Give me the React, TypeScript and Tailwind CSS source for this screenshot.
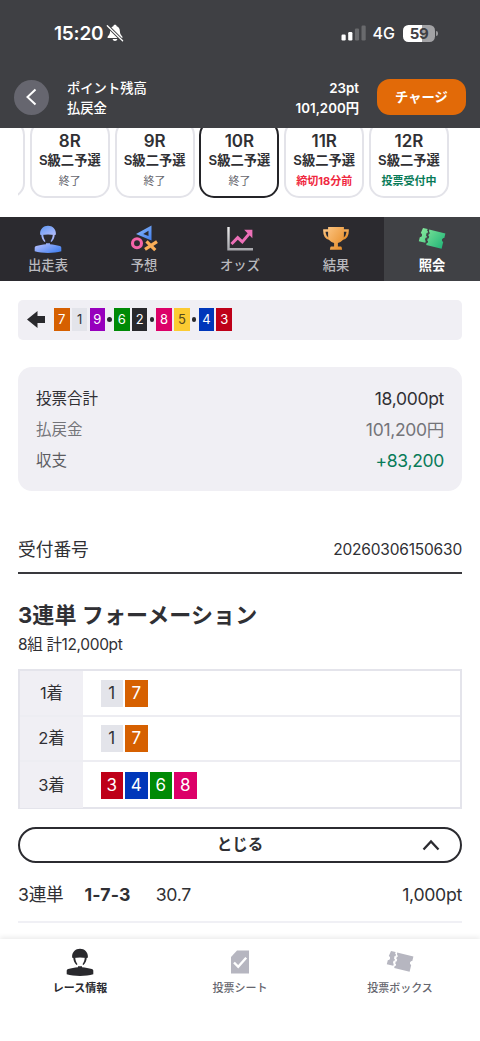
import React from 'react';

type Race = { no: string; name: string; status: string; tone: string; selected?: boolean };

const races: Race[] = [
  { no: '8R', name: 'S級二予選', status: '終了', tone: 'text-[#66666e]' },
  { no: '9R', name: 'S級二予選', status: '終了', tone: 'text-[#66666e]' },
  { no: '10R', name: 'S級二予選', status: '終了', tone: 'text-[#66666e]', selected: true },
  { no: '11R', name: 'S級二予選', status: '締切18分前', tone: 'text-[#f02840] font-bold' },
  { no: '12R', name: 'S級二予選', status: '投票受付中', tone: 'text-[#087b58] font-bold' },
];

const numberColors: Record<number, string> = {
  1: 'bg-[#e3e4ea] text-[#333338]',
  2: 'bg-[#29292d] text-white',
  3: 'bg-[#be0018] text-white',
  4: 'bg-[#0037ba] text-white',
  5: 'bg-[#fccb32] text-[#55481c]',
  6: 'bg-[#008a06] text-white',
  7: 'bg-[#d66000] text-white',
  8: 'bg-[#dc0068] text-white',
  9: 'bg-[#9700bd] text-white',
};

const lineGroups = [[7, 1, 9], [6, 2], [8, 5], [4, 3]];

const formation = [
  { place: '1着', numbers: [1, 7] },
  { place: '2着', numbers: [1, 7] },
  { place: '3着', numbers: [3, 4, 6, 8] },
];

const RiderIcon: React.FC<{ fill: string; className?: string }> = ({ fill, className }) => (
  <svg viewBox="0 0 28 28" className={className} fill={fill}>
    <path d="M6.100 8.800C6 4.200 9.400 .8 14 .8s8 3.400 7.900 8c0 .9-.5 1.400-1.300 1.300-4.400-.9-8.800-.9-13.200 0-.8.1-1.300-.4-1.300-1.300Z" />
    <path d="M7.300 9.500h1.900c.2 2.900 1 4.900 2.300 6.800l-1 .6C8.300 14.900 7.300 12.300 7.300 9.500Zm13.400 0h-1.900c-.2 2.900-1 4.900-2.300 6.800l1 .6c2.200-2 3.200-4.600 3.200-7.400Z" />
    <path d="M12 18.200h4v1.100c3.300.2 7 .9 9.800 1.700 1 .3 1.500.9 1.500 1.700v3.500c-3.800 1.200-8.300 1.700-13.300 1.700S4.500 27.400.7 26.200v-3.500c0-.8.5-1.400 1.500-1.700 2.800-.8 6.500-1.500 9.800-1.700v-1.100Z" />
  </svg>
);

const TicketIcon: React.FC<{ fill: string; className?: string }> = ({ fill, className }) => (
  <svg viewBox="0 0 28 24" className={className} fill={fill}>
    <path d="m5 .9 4.600 1.200-.5 1.900.9.200-.5 2.100-.9-.2-.6 2.600.9.200-.5 2.100-.9-.2-.6 2.600.9.200-.5 2.200-6.500-1.600 1-3.900c1.200-.1 2-.7 2.200-1.700.3-1.100-.2-2-1.200-2.600Z" />
    <path d="m11.100 2.500 16.300 4-1.100 4.500c-1.200 0-2 .6-2.300 1.600-.2 1 .2 1.900 1.200 2.500l-1.600 6.600-15.400-3.800.5-2 .9.200.5-2.100-.9-.2.600-2.600.9.200.5-2.100-.9-.2.600-2.600.9.200.2-1.100-.9-.2Z" />
  </svg>
);

const PredictionIcon = () => (
  <svg viewBox="0 0 28 28" className="h-7 w-7" fill="none">
    <path fillRule="evenodd" d="M21.500.6v14.800L6 9.100Zm-3 5.200-5.300 3.100 5.300 2.200Z" fill="url(#blue)" />
    <circle cx="7" cy="18.300" r="4.500" stroke="#f564a8" strokeWidth="3.100" />
    <path d="m16.500 16.300 8.800 8.800M27 16.600l-12 7.800" stroke="#faae58" strokeWidth="3.200" />
  </svg>
);

const OddsIcon = () => (
  <svg viewBox="0 0 28 28" className="h-7 w-7" fill="none">
    <path d="M2.500 2v22.300H27" stroke="url(#silver)" strokeWidth="2.400" />
    <path d="m5.500 19 6.200-6.300 4.600 4.200 7.600-9" stroke="#ed70b8" strokeWidth="3" />
    <path d="M18.200 4.700h8.200v8.500Z" fill="#ed70b8" />
  </svg>
);

const TrophyIcon = () => (
  <svg viewBox="0 0 28 28" className="h-7 w-7" fill="none">
    <path d="M7 5.500H2.300c-.1 5 2.100 8 6 8.700M21 5.500h4.700c.1 5-2.100 8-6 8.700" stroke="url(#gold)" strokeWidth="2.300" />
    <path d="M6.100 2h15.800v8.500c0 4-2.300 6.700-6 7.500v3.500h2.600c.7 0 1 .3 1.200 1l.4 2.300H7.900l.4-2.300c.2-.7.5-1 1.200-1h2.600V18c-3.700-.8-6-3.500-6-7.500V2Z" fill="url(#gold)" />
  </svg>
);

const tabs = [
  { label: '出走表', icon: <RiderIcon fill="url(#rider)" className="h-7 w-7" /> },
  { label: '予想', icon: <PredictionIcon /> },
  { label: 'オッズ', icon: <OddsIcon /> },
  { label: '結果', icon: <TrophyIcon /> },
  { label: '照会', icon: <TicketIcon fill="url(#green)" className="h-6 w-7" />, active: true },
];

const Gradients = () => (
  <svg className="absolute h-0 w-0">
    <defs>
      <linearGradient id="rider" gradientUnits="userSpaceOnUse" x1="6" y1="0" x2="20" y2="28">
        <stop stopColor="#5b95f2" />
        <stop offset="0.5" stopColor="#b2bcfc" />
        <stop offset="1" stopColor="#4c86f2" />
      </linearGradient>
      <linearGradient id="blue" x1="0" y1="0" x2="1" y2="1">
        <stop stopColor="#8fbcfa" />
        <stop offset="1" stopColor="#417eed" />
      </linearGradient>
      <linearGradient id="gold" x1="0" y1="0" x2="1" y2="1">
        <stop stopColor="#fbc27e" />
        <stop offset="1" stopColor="#e78b24" />
      </linearGradient>
      <linearGradient id="green" gradientUnits="userSpaceOnUse" x1="2" y1="2" x2="25" y2="22">
        <stop stopColor="#88e99d" />
        <stop offset="1" stopColor="#20b477" />
      </linearGradient>
      <linearGradient id="silver" x1="0" y1="0" x2="0" y2="1">
        <stop stopColor="#eeeeef" />
        <stop offset="1" stopColor="#a8a8ad" />
      </linearGradient>
    </defs>
  </svg>
);

const StatusBar = () => (
  <div className="flex h-[66px] items-center pr-[42px] pl-[54px] text-white">
    <span className="pt-px text-[19px] leading-6 font-semibold tracking-[-0.2px]">15:20</span>
    <svg viewBox="0 0 18 18" className="ml-[3px] h-[18px] w-[18px]">
      <path d="M9 .8c-1 0-1.700.6-1.700 1.500C5 3 4.200 5 4.100 7.300 4 10 3.200 11 1.800 12.400c-.6.700-.3 1.600.6 1.600h13.200c.9 0 1.200-.9.600-1.600-1.400-1.400-2.200-2.400-2.300-5.100-.1-2.300-.9-4.300-3.200-5C10.700 1.400 10 .8 9 .8ZM6.600 15h4.800c-.3 1.300-1.200 2-2.400 2s-2.100-.7-2.400-2Z" fill="white" />
      <path d="M1.300 1.700 16.600 16.800" stroke="#3f4044" strokeWidth="3.200" />
      <path d="M1.300 1.700 16.600 16.800" stroke="white" strokeWidth="1.300" strokeLinecap="round" />
    </svg>
    <div className="ml-auto flex items-center">
      <svg viewBox="0 0 25 16" className="h-4 w-[25px]" fill="white">
        <rect x="0.500" y="9.500" width="4.200" height="6" rx="1.200" />
        <rect x="7.200" y="7" width="4.200" height="8.500" rx="1.200" />
        <rect x="13.900" y="3.500" width="4.200" height="12" rx="1.200" opacity=".22" />
        <rect x="20.500" y="0.500" width="4.200" height="15" rx="1.200" opacity=".22" />
      </svg>
      <span className="ml-[7px] text-[16px] leading-5 font-medium">4G</span>
      <div className="ml-2 flex h-[17px] w-[32px] items-center justify-center rounded-[5.500px] bg-linear-to-r from-white from-59% to-[#a2a2a5] to-59% text-[15px] leading-[17px] font-bold tracking-[-0.5px] text-[#3f4044]">
        59
      </div>
      <span className="ml-px h-[5px] w-[2px] rounded-r-full bg-[#98989b]" />
    </div>
  </div>
);

const NumberBox: React.FC<{ value: number; small?: boolean }> = ({ value, small }) => (
  <span
    className={`flex items-center justify-center ${numberColors[value]} ${
      small ? 'h-[22.500px] w-[15.500px] text-[13px]' : 'h-[27px] w-[22.500px] text-[17px]'
    }`}
  >
    {value}
  </span>
);

const RaceCard: React.FC<{ race: Race }> = ({ race }) => (
  <div
    className={`flex h-[78px] w-[80px] shrink-0 flex-col items-center rounded-[15px] border-2 bg-white pt-2 ${
      race.selected ? 'border-[#242428]' : 'border-[#e3e3e9]'
    }`}
  >
    <span className="text-[17px] leading-[22px] font-semibold">{race.no}</span>
    <span className="text-[13.300px] leading-4 font-semibold whitespace-nowrap">{race.name}</span>
    <span className={`mt-[5px] text-[11px] leading-4 whitespace-nowrap ${race.tone}`}>{race.status}</span>
  </div>
);

export default function App() {
  return (
    <div className="flex h-[1041px] w-[480px] flex-col overflow-hidden bg-white font-['Inter','Noto_Sans_CJK_JP',sans-serif] text-[#303034]">
      <Gradients />

      <header className="h-[128px] shrink-0 bg-[#3f4044] text-white">
        <StatusBar />
        <div className="flex h-[62px] items-center pr-[14px] pl-[14px]">
          <button className="flex h-[35px] w-[35px] items-center justify-center rounded-full bg-[#66666f]">
            <svg viewBox="0 0 18 18" className="h-[18px] w-[18px]" fill="none" stroke="white" strokeWidth="2">
              <path d="m12.500 1.500-8 7.500 8 7.500" />
            </svg>
          </button>
          <div className="ml-[18px] pt-px text-[13.300px] leading-5 font-medium">
            <p>ポイント残高</p>
            <p>払戻金</p>
          </div>
          <div className="ml-auto pt-px text-right text-[13.300px] leading-5 font-semibold">
            <p>23pt</p>
            <p>101,200円</p>
          </div>
          <button className="ml-[18px] h-9 w-[89px] rounded-[13px] bg-[#e26a08] pt-0.5 text-[13.300px] font-bold">チャージ</button>
        </div>
      </header>

      <div className="h-[89px] shrink-0 overflow-hidden pl-[18px]">
        <div className="-mt-2 flex justify-end gap-[4.800px] overflow-hidden pr-[31px]">
          <div className="h-[78px] w-[80px] shrink-0 rounded-[15px] border-2 border-[#e3e3e9]" />
          {races.map((race) => (
            <RaceCard key={race.no} race={race} />
          ))}
        </div>
      </div>

      <nav className="grid h-16 shrink-0 grid-cols-5 bg-[#2b2a2f]">
        {tabs.map((tab) => (
          <button
            key={tab.label}
            className={`flex flex-col items-center pt-2 ${
              tab.active ? 'bg-[#404145] font-bold text-white' : 'font-medium text-[#b9b9be]'
            }`}
          >
            <span className="flex h-7 items-center">{tab.icon}</span>
            <span className="mt-1 text-[13.300px] leading-4">{tab.label}</span>
          </button>
        ))}
      </nav>

      <main className="min-h-0 flex-1 overflow-hidden px-[18px] pt-[18.500px]">
        <div className="flex h-10 items-center rounded-[5px] bg-[#f0eff4] pl-[9px]">
          <svg viewBox="0 0 18 18" className="h-[18px] w-[18px]" fill="#29292d">
            <path d="M0 8.500 10.500 0v5H18v7h-7.500v5Z" />
          </svg>
          <div className="ml-[9px] flex gap-[2.300px]">
            {lineGroups.map((group, i) => (
              <React.Fragment key={i}>
                {i > 0 && (
                  <span className="flex w-[4.400px] items-center justify-center">
                    <span className="h-[4.500px] w-[4.500px] shrink-0 rounded-full bg-[#29292d]" />
                  </span>
                )}
                {group.map((n) => (
                  <NumberBox key={n} value={n} small />
                ))}
              </React.Fragment>
            ))}
          </div>
        </div>

        <dl className="mt-[27px] flex h-[124px] flex-col justify-center rounded-[14px] bg-[#f0eff4] px-[18px] pt-[2px] leading-[31.300px]">
          <div className="flex justify-between">
            <dt className="text-[15.500px]">投票合計</dt>
            <dd className="text-[17.500px] tracking-[-0.3px]">18,000pt</dd>
          </div>
          <div className="flex justify-between text-[#747479]">
            <dt className="text-[15.500px]">払戻金</dt>
            <dd className="text-[17.500px] tracking-[-0.3px]">101,200円</dd>
          </div>
          <div className="flex justify-between">
            <dt className="text-[15.500px] text-[#5c5c61]">収支</dt>
            <dd className="text-[17.500px] tracking-[-0.3px] text-[#087b58]">+83,200</dd>
          </div>
        </dl>

        <div className="mt-[35px] flex h-[48px] items-center justify-between border-b-[2.500px] border-[#39393d]">
          <span className="pt-[3px] text-[17.700px]">受付番号</span>
          <span className="pt-[2px] text-[15.500px] tracking-[-0.2px]">20260306150630</span>
        </div>

        <h2 className="mt-[25px] text-[22px] leading-8 font-bold tracking-[0.1px] whitespace-nowrap">3連単 フォーメーション</h2>
        <p className="mt-[4.500px] text-[15.500px] leading-5 tracking-[-0.35px]">8組 計12,000pt</p>

        <div className="mt-[14px] h-[139.500px] divide-y-2 divide-[#ededf2] border-2 border-[#e4e4eb]">
          {formation.map((row) => (
            <div key={row.place} className="flex h-[45.500px]">
              <div className="flex w-[63px] items-center justify-center bg-[#f0eff4] pt-px text-[16.500px]">{row.place}</div>
              <div className="flex items-center gap-[2px] pt-px pl-[17.500px]">
                {row.numbers.map((n) => (
                  <NumberBox key={n} value={n} />
                ))}
              </div>
            </div>
          ))}
        </div>

        <button className="mt-[18.500px] grid h-9 w-full grid-cols-[1fr_auto_1fr] items-center rounded-full border-[2.500px] border-[#2b2b30] px-5 text-[15.500px] font-bold">
          <span />
          <span>とじる</span>
          <svg viewBox="0 0 18 12" className="h-3 w-[18px] justify-self-end" fill="none" stroke="#2b2b30" strokeWidth="2.300">
            <path d="m1.500 10.500 7.500-8 7.500 8" />
          </svg>
        </button>

        <div className="flex h-[59.500px] items-center border-b-2 border-[#f0f0f5] pt-[8px] text-[17.700px] tracking-[-0.3px]">
          <span>3連単</span>
          <span className="ml-[21px] font-bold tracking-[0.2px]">1-7-3</span>
          <span className="ml-[25px]">30.7</span>
          <span className="ml-auto">1,000pt</span>
        </div>
      </main>

      <footer className="relative grid h-[102px] shrink-0 grid-cols-3 items-start bg-white pt-[9px] text-[11px] leading-4 font-medium text-[#66666e] shadow-[0_-2px_5px_rgba(0,0,0,0.08)]">
        <div className="flex flex-col items-center font-bold text-[#2b2b30]">
          <RiderIcon fill="#29292d" className="h-7 w-7" />
          <span className="mt-1">レース情報</span>
        </div>
        <div className="flex flex-col items-center">
          <svg viewBox="0 0 28 28" className="h-7 w-7" fill="none">
            <path d="M11 2.500h12v23H5V9Z" fill="#b6b6c0" />
            <path d="m8 14.500 4.200 4.300 8-9" stroke="white" strokeWidth="2.400" />
          </svg>
          <span className="mt-1">投票シート</span>
        </div>
        <div className="flex flex-col items-center">
          <span className="flex h-7 items-center">
            <TicketIcon fill="#b6b6c0" className="h-6 w-7" />
          </span>
          <span className="mt-1">投票ボックス</span>
        </div>
      </footer>
    </div>
  );
}
